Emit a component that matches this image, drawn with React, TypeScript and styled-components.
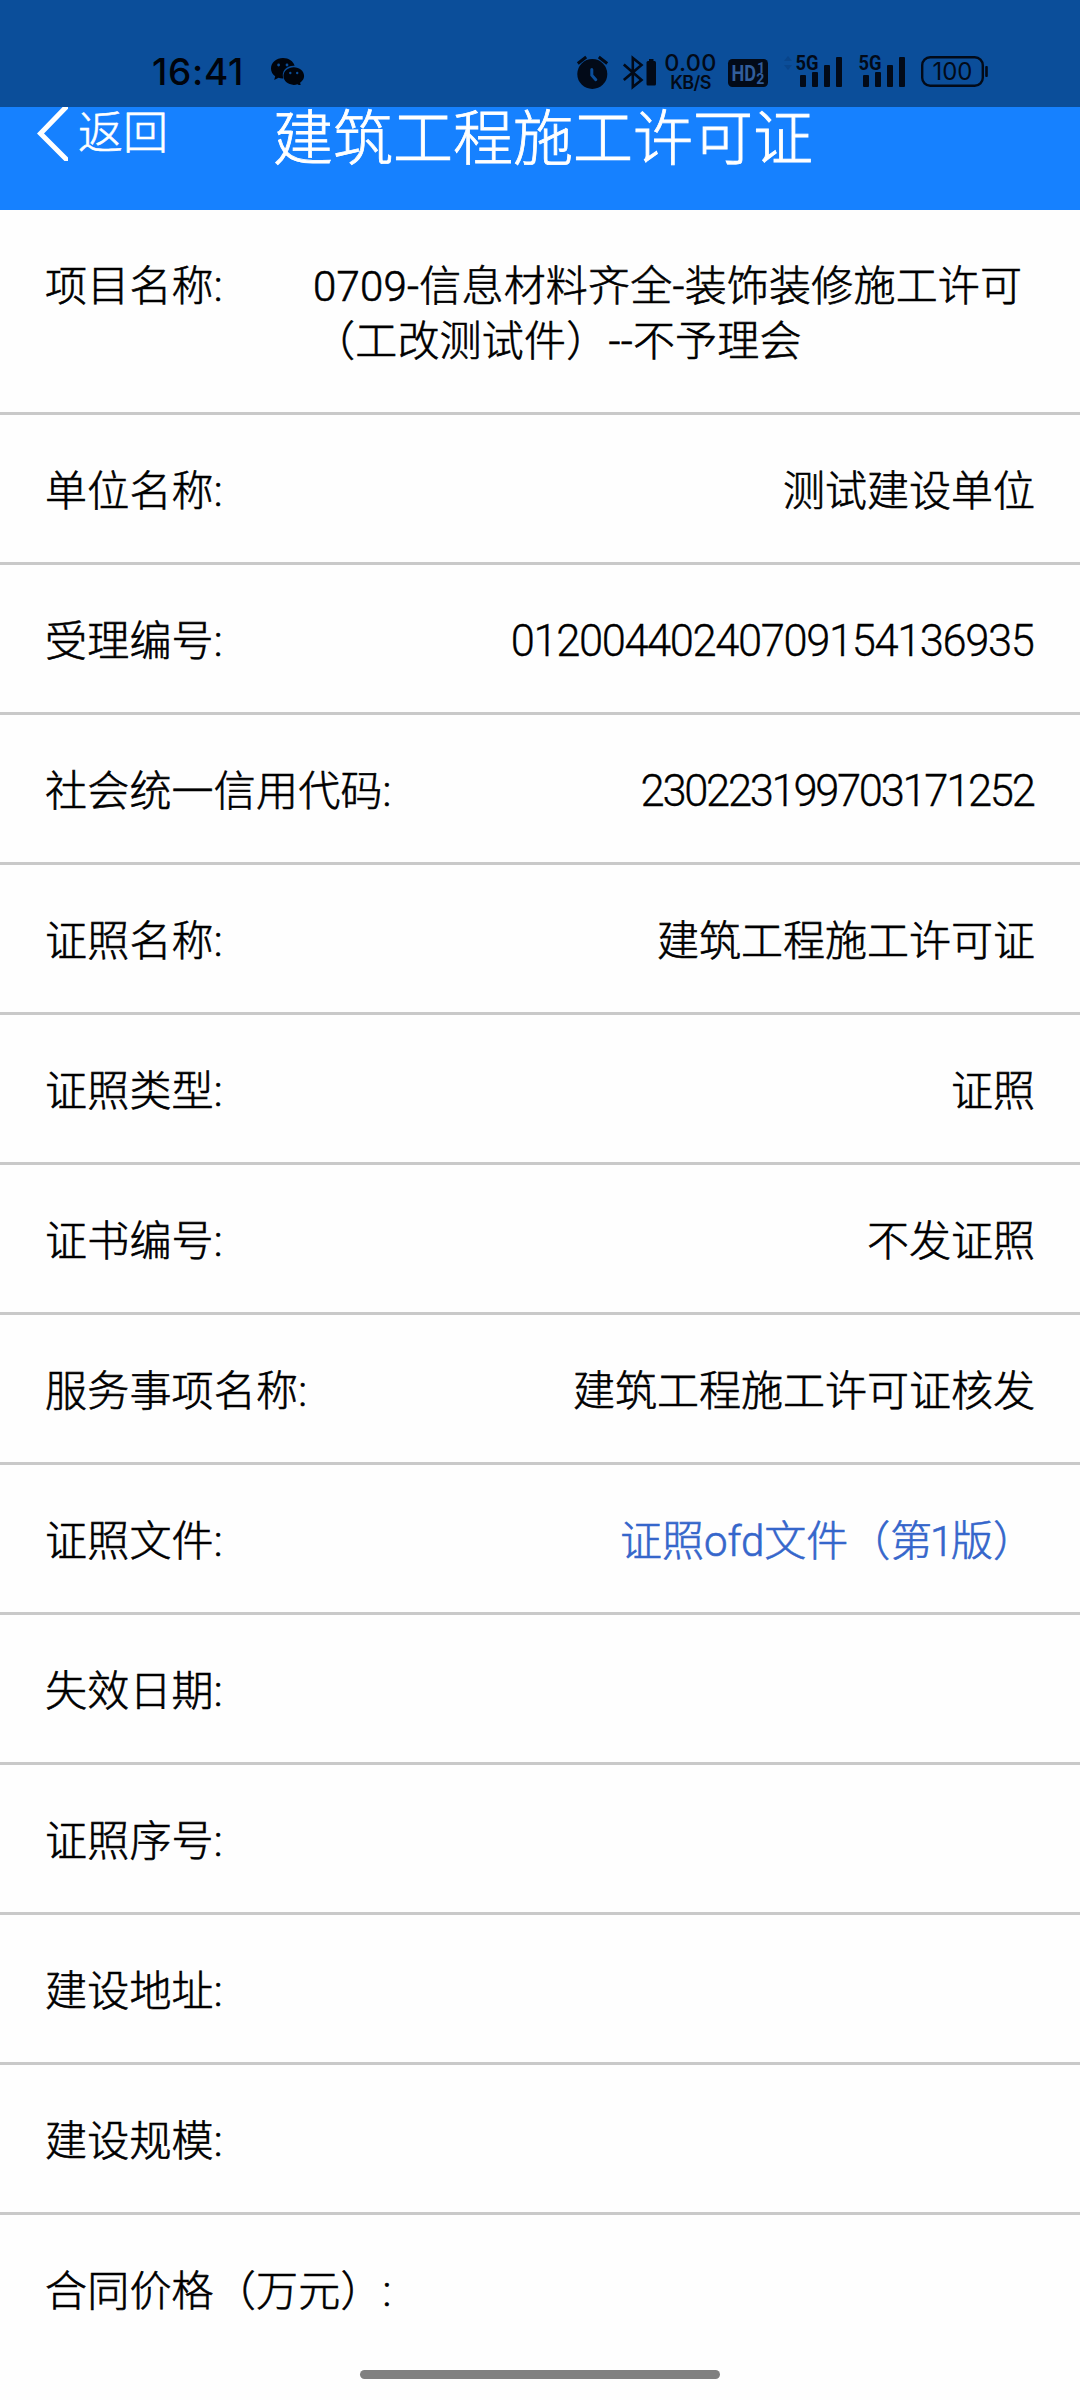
import React from 'react';
import styled, { createGlobalStyle } from 'styled-components';

const INK = '#020a18';

const GlobalStyle = createGlobalStyle`
  *, *::before, *::after { box-sizing: border-box; }
  html, body { margin: 0; padding: 0; }
  body {
    background: #fefefe;
    color: #000;
    font-family: Roboto, "Noto Sans CJK SC", sans-serif;
    font-weight: 300;
  }
`;

const Screen = styled.div`
  position: relative;
  display: flex;
  flex-direction: column;
  width: 1080px;
  height: 2400px;
  overflow: hidden;
`;

const StatusBar = styled.div`
  display: flex;
  align-items: flex-start;
  flex: none;
  height: 107px;
  padding: 55px 92px 0 152px;
  background: #0b4e9a;
  color: ${INK};
`;

const Clock = styled.div`
  width: 119px;
  font: 500 37px/34px Inter, sans-serif;
  letter-spacing: 0.7px;
  color: #00040c;
`;

const StatusIcons = styled.div`
  display: flex;
  align-items: flex-start;
  margin-left: auto;
`;

const StatusSlot = styled.div<{ $w: number; $gap?: number }>`
  flex: none;
  width: ${(p) => p.$w}px;
  height: 36px;
  margin-left: ${(p) => p.$gap ?? 0}px;
  svg { display: block; overflow: visible; }
`;

const Speed = styled.div`
  display: flex;
  flex-direction: column;
  align-items: center;
  font-family: Inter, sans-serif;
  font-weight: 500;
  white-space: nowrap;
`;

const SpeedValue = styled.span`
  font-size: 23.5px;
  line-height: 16px;
  letter-spacing: 0.3px;
`;

const SpeedUnit = styled.span`
  font-size: 18px;
  line-height: 23px;
  font-weight: 600;
  letter-spacing: -0.6px;
`;

const Header = styled.header`
  display: flex;
  flex: none;
  height: 103px;
  background: #1681ff;
  color: #fff;
`;

const Back = styled.div`
  display: flex;
  width: 273px;
  padding-left: 37px;
  font-size: 45px;
  line-height: 53px;
  white-space: nowrap;
  -webkit-text-stroke: 0.6px currentColor;
  svg { display: block; flex: none; margin-right: 10px; }
`;

const Title = styled.h1`
  margin: 0;
  font-size: 60px;
  line-height: 65px;
  font-weight: 300;
  white-space: nowrap;
  -webkit-text-stroke: 0.8px currentColor;
`;

const Row = styled.div<{ $tall?: boolean }>`
  display: flex;
  justify-content: space-between;
  flex: none;
  height: ${(p) => (p.$tall ? 205 : 150)}px;
  padding: 49px 45px 0;
  border-bottom: 3px solid #c9c9c9;
  font-size: 42px;
  line-height: 55px;
  white-space: nowrap;
  -webkit-text-stroke: 0.6px currentColor;
  &:last-child { border-bottom: 0; }
`;

const Label = styled.span`
  letter-spacing: 0.2px;
`;

const Value = styled.span<{ $spacing?: number; $block?: boolean }>`
  letter-spacing: ${(p) => p.$spacing ?? 0}px;
  font-size: ${(p) => (p.$spacing ? 43.5 : 42)}px;
  ${(p) => p.$spacing && '-webkit-text-stroke-width: 0.3px; margin-right: 1.5px;'}
  ${(p) => p.$block && 'width: 722px; white-space: pre-line; letter-spacing: 0.2px;'}
`;

const FileLink = styled.a`
  color: #3566cb;
`;

const NarrowDigit = styled.span`
  margin: 0 -2.3px;
`;

const HomeBar = styled.div`
  position: absolute;
  left: 360px;
  top: 2370px;
  width: 360px;
  height: 9px;
  border-radius: 5px;
  background: #808080;
`;

const WeChat = () => (
  <svg width="34" height="30" viewBox="0 0 34 30">
    <g fill="#00040c">
      <path d="M12 3C5.4 3 0 7.6 0 13.4c0 3.200 1.600 6 4.200 7.900L3.200 25l4.300-2.200c1.700.5 3 .7 4.900.6-2.600-7 3-13.200 11.200-12.700C22.400 6.300 17.800 3 12 3Z" />
      <path d="M22.800 12.300c-5.700 0-10.300 3.900-10.300 8.800s4.600 8.800 10.300 8.800c1.300 0 2.500-.2 3.600-.6l3.600 1.800-.9-3.300c2.400-1.600 4-4 4-6.700 0-4.900-4.600-8.800-10.300-8.800Z" />
    </g>
    <g fill="#0b4e9a">
      <circle cx="7.600" cy="10" r="1.400" />
      <circle cx="16" cy="10" r="1.400" />
      <circle cx="19.300" cy="18" r="1.200" />
      <circle cx="26.200" cy="18" r="1.200" />
    </g>
  </svg>
);

const Alarm = () => (
  <svg width="31" height="34" viewBox="0 0 31 34">
    <circle cx="15.300" cy="19" r="15" fill={INK} />
    <path d="M.8 8.500 9.200 2M21.800 2l8.400 6.500" stroke={INK} strokeWidth="3" fill="none" />
    <path d="M14.800 14.500v5.700l4 4.500" stroke="#0b4e9a" strokeWidth="3" strokeLinecap="round" fill="none" />
  </svg>
);

const Bluetooth = () => (
  <svg width="33" height="34" viewBox="0 0 33 34">
    <path d="M.8 9.500 18.500 25 9.800 32V3l8.700 7L.8 25" stroke={INK} strokeWidth="2.600" fill="none" />
    <rect x="23.500" y="6" width="9.500" height="24.500" rx="1.500" fill={INK} />
    <rect x="26" y="4" width="4.500" height="3" fill={INK} />
  </svg>
);

const HdVoice = () => (
  <svg width="40" height="34" viewBox="0 0 40 34">
    <rect y="4" width="40" height="28" rx="4.500" fill={INK} />
    <g fill="#315d9b" fontFamily="Roboto, sans-serif" fontWeight="700">
      <text x="3.500" y="25.500" fontSize="21.500" textLength="24.500" lengthAdjust="spacingAndGlyphs">HD</text>
      <text x="29" y="17.500" fontSize="14">1</text>
      <text x="28.300" y="29" fontSize="14">2</text>
    </g>
  </svg>
);

const BARS = [
  { x: 4, y: 20 },
  { x: 16, y: 17 },
  { x: 28, y: 10 },
  { x: 40, y: 2 },
];

const Signal = () => (
  <svg width="46" height="34" viewBox="0 0 46 34">
    <text x="-0.500" y="15.300" fontSize="20.500" fontWeight="700" fontFamily="Roboto, sans-serif" fill={INK} textLength="23" lengthAdjust="spacingAndGlyphs">5G</text>
    {BARS.map((b) => (
      <rect key={b.x} x={b.x} y={b.y} width="6" height={32 - b.y} rx="1" fill={INK} />
    ))}
  </svg>
);

const DataArrows = () => (
  <svg width="8" height="16" viewBox="0 0 8 16">
    <path d="M0 6 4 1l4 5ZM0 10h8l-4 5Z" fill="#09458b" />
  </svg>
);

const Battery = () => (
  <svg width="67" height="34" viewBox="0 0 67 34">
    <rect x="1.200" y="2.200" width="60.600" height="28.600" rx="8" fill="none" stroke={INK} strokeWidth="2.400" />
    <rect x="64.200" y="11" width="2.600" height="11" rx="1" fill={INK} />
    <text x="11.500" y="25.300" fontSize="24.500" fontFamily="Inter, sans-serif" fontWeight="400" fill={INK} textLength="40" lengthAdjust="spacingAndGlyphs">100</text>
  </svg>
);

const BackChevron = () => (
  <svg width="31" height="54" viewBox="0 0 31 54">
    <path d="M32-3 3.500 26.500 32 55" stroke="#fff" strokeWidth="5" fill="none" />
  </svg>
);

type Field = {
  label: string;
  value?: string;
  spacing?: number;
  tall?: boolean;
  file?: boolean;
};

const FIELDS: Field[] = [
  { label: '项目名称:', value: '0709-信息材料齐全-装饰装修施工许可\n（工改测试件）--不予理会', tall: true },
  { label: '单位名称:', value: '测试建设单位' },
  { label: '受理编号:', value: '01200440240709154136935', spacing: -1.4 },
  { label: '社会统一信用代码:', value: '230223199703171252', spacing: -2.3 },
  { label: '证照名称:', value: '建筑工程施工许可证' },
  { label: '证照类型:', value: '证照' },
  { label: '证书编号:', value: '不发证照' },
  { label: '服务事项名称:', value: '建筑工程施工许可证核发' },
  { label: '证照文件:', file: true },
  { label: '失效日期:' },
  { label: '证照序号:' },
  { label: '建设地址:' },
  { label: '建设规模:' },
  { label: '合同价格（万元）:' },
];

export default function App() {
  return (
    <Screen>
      <GlobalStyle />
      <StatusBar>
        <Clock>16:41</Clock>
        <WeChat />
        <StatusIcons>
          <StatusSlot $w={31}><Alarm /></StatusSlot>
          <StatusSlot $w={33} $gap={15}><Bluetooth /></StatusSlot>
          <StatusSlot $w={51} $gap={9}>
            <Speed>
              <SpeedValue>0.00</SpeedValue>
              <SpeedUnit>KB/S</SpeedUnit>
            </Speed>
          </StatusSlot>
          <StatusSlot $w={40} $gap={12}><HdVoice /></StatusSlot>
          <StatusSlot $w={8} $gap={16}><DataArrows /></StatusSlot>
          <StatusSlot $w={46} $gap={4}><Signal /></StatusSlot>
          <StatusSlot $w={46} $gap={17}><Signal /></StatusSlot>
          <StatusSlot $w={67} $gap={16}><Battery /></StatusSlot>
        </StatusIcons>
      </StatusBar>
      <Header>
        <Back>
          <BackChevron />
          返回
        </Back>
        <Title>建筑工程施工许可证</Title>
      </Header>
      <main>
        {FIELDS.map((f) => (
          <Row key={f.label} $tall={f.tall}>
            <Label>{f.label}</Label>
            {f.value && (
              <Value $spacing={f.spacing} $block={f.tall}>{f.value}</Value>
            )}
            {f.file && (
              <FileLink>证照ofd文件（第<NarrowDigit>1</NarrowDigit>版）</FileLink>
            )}
          </Row>
        ))}
      </main>
      <HomeBar />
    </Screen>
  );
}
